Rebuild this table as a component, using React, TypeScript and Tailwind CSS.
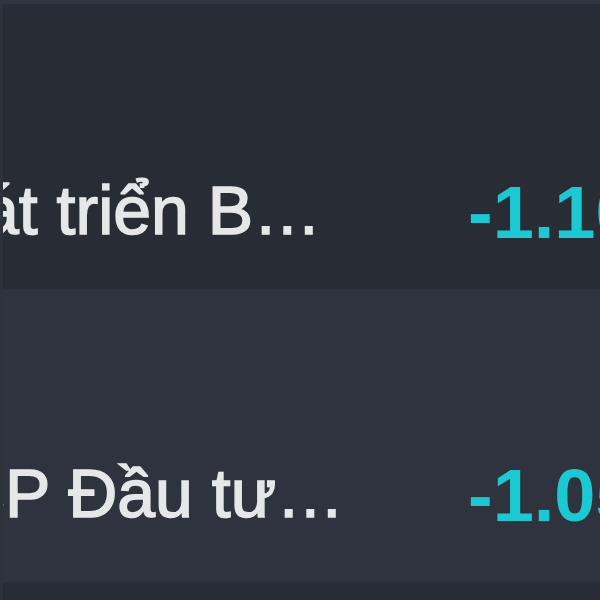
export default function App() {
  return (
    <div className="w-[600px] h-[600px] overflow-hidden bg-[#282c35] font-['Liberation_Sans',Arial,sans-serif] blur-[0.7px]">
      {/* top edge of previous row */}
      <div className="h-[4px] bg-[#30343e]" />
      <div className="flex border-l-[3px] border-[#2e323b]">
        <div className="flex-1">
          {/* row 1 */}
          <div className="h-[285px] bg-[#282c35] flex items-start pt-[172px]">
            <div className="w-[340px] overflow-hidden">
              <div className="ml-[-22px] whitespace-nowrap text-[68px] leading-none text-[#e6e7e9] [-webkit-text-stroke:1.5px_#e6e7e9]">
                át triển B…
              </div>
            </div>
            <div className="flex-1 overflow-hidden pl-[125px]">
              <div className="whitespace-nowrap text-[74px] leading-none font-bold text-[#1cc8d2]">
                -1.10%
              </div>
            </div>
          </div>
          {/* row 2 */}
          <div className="h-[293px] bg-[#2f333e] flex items-start pt-[170px]">
            <div className="w-[340px] overflow-hidden">
              <div className="ml-[-47px] whitespace-nowrap text-[68px] leading-none text-[#e6e7e9] [-webkit-text-stroke:1.5px_#e6e7e9]">
                CP Đầu tư…
              </div>
            </div>
            <div className="flex-1 overflow-hidden pl-[125px]">
              <div className="whitespace-nowrap text-[74px] leading-none font-bold text-[#1cc8d2]">
                -1.05%
              </div>
            </div>
          </div>
          {/* row 3 */}
          <div className="h-[20px] bg-[#282c35]" />
        </div>
        <div className="w-[8px] bg-[#30343e]" />
      </div>
    </div>
  );
}
